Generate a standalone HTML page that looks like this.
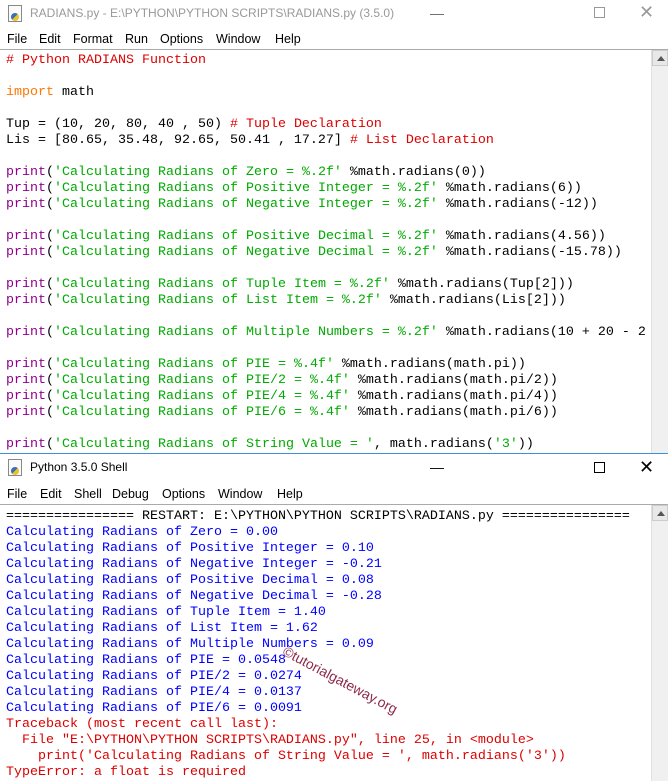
<!DOCTYPE html>
<html><head><meta charset="utf-8"><style>
*{margin:0;padding:0;box-sizing:border-box}
body{width:668px;height:781px;background:#fff;position:relative;overflow:hidden;font-family:"Liberation Sans",sans-serif}
.title{position:absolute;left:0;width:668px;height:27px;background:#fff;font-size:12px;color:#999}
.title span{position:absolute;left:30px;top:6px}
.menu{position:absolute;left:0;width:668px;height:22px;font-size:12.5px;color:#000}
.menu span{position:absolute;top:4px}
.code{position:absolute;left:0;width:651px;background:#fff;font-family:"Liberation Mono",monospace;font-size:13.33px;line-height:16px;white-space:pre;padding-left:6px;overflow:hidden}
.sb{position:absolute;left:651px;width:17px;background:#f0f0f0;border-left:1px solid #e0e0e0}
.sb i{position:absolute;left:0;top:0;width:16px;height:16px;background:#e8e8e8;border:1px solid #ccc}
.sb i:after{content:"";position:absolute;left:4px;top:5px;border-left:4px solid transparent;border-right:4px solid transparent;border-bottom:5px solid #555}
.r{color:#dd0000}.o{color:#ff7700}.p{color:#900090}.g{color:#00aa00}.b{color:#0000ff}
.ctl{position:absolute;font-size:18px;color:#333}
.icon{position:absolute;left:8px;width:14px;height:17px;border:1px solid #888;background:#fafafa}
.icon:after{content:"";position:absolute;left:2px;top:7px;width:8px;height:8px;border-radius:50%;background:linear-gradient(135deg,#3a6fb0 50%,#e8c030 50%)}
</style></head><body>

<div class="title" style="top:0"><div class="icon" style="top:5px"></div><span>RADIANS.py - E:\PYTHON\PYTHON SCRIPTS\RADIANS.py (3.5.0)</span>
<div class="ctl" style="left:430px;top:5px;font-size:14px;color:#666">&#8212;</div>
<div style="position:absolute;left:594px;top:7px;width:11px;height:11px;border:1px solid #999"></div>
<div class="ctl" style="left:639px;top:2px;color:#999">&#10005;</div></div>
<div class="menu" style="top:28px"><span style="left:7px">File</span><span style="left:39px">Edit</span><span style="left:73px">Format</span><span style="left:125px">Run</span><span style="left:160px">Options</span><span style="left:216px">Window</span><span style="left:275px">Help</span></div>
<div style="position:absolute;left:0;top:49px;width:668px;height:1px;background:#aaa"></div>

<div class="code" style="top:53px;height:400px"><span class="r"># Python RADIANS Function</span>

<span class="o">import</span> math

Tup = (10, 20, 80, 40 , 50) <span class="r"># Tuple Declaration</span>
Lis = [80.65, 35.48, 92.65, 50.41 , 17.27] <span class="r"># List Declaration</span>

<span class="p">print</span>(<span class="g">'Calculating Radians of Zero = %.2f'</span> %math.radians(0))
<span class="p">print</span>(<span class="g">'Calculating Radians of Positive Integer = %.2f'</span> %math.radians(6))
<span class="p">print</span>(<span class="g">'Calculating Radians of Negative Integer = %.2f'</span> %math.radians(-12))

<span class="p">print</span>(<span class="g">'Calculating Radians of Positive Decimal = %.2f'</span> %math.radians(4.56))
<span class="p">print</span>(<span class="g">'Calculating Radians of Negative Decimal = %.2f'</span> %math.radians(-15.78))

<span class="p">print</span>(<span class="g">'Calculating Radians of Tuple Item = %.2f'</span> %math.radians(Tup[2]))
<span class="p">print</span>(<span class="g">'Calculating Radians of List Item = %.2f'</span> %math.radians(Lis[2]))

<span class="p">print</span>(<span class="g">'Calculating Radians of Multiple Numbers = %.2f'</span> %math.radians(10 + 20 - 2

<span class="p">print</span>(<span class="g">'Calculating Radians of PIE = %.4f'</span> %math.radians(math.pi))
<span class="p">print</span>(<span class="g">'Calculating Radians of PIE/2 = %.4f'</span> %math.radians(math.pi/2))
<span class="p">print</span>(<span class="g">'Calculating Radians of PIE/4 = %.4f'</span> %math.radians(math.pi/4))
<span class="p">print</span>(<span class="g">'Calculating Radians of PIE/6 = %.4f'</span> %math.radians(math.pi/6))

<span class="p">print</span>(<span class="g">'Calculating Radians of String Value = '</span>, math.radians(<span class="g">'3'</span>))</div>
<div class="sb" style="top:50px;height:403px"><i></i></div>

<div style="position:absolute;left:0;top:453px;width:668px;height:1px;background:#3c8fd8"></div>
<div class="title" style="top:454px"><div class="icon" style="top:5px"></div><span style="color:#000">Python 3.5.0 Shell</span>
<div class="ctl" style="left:430px;top:5px;font-size:14px;color:#000">&#8212;</div>
<div style="position:absolute;left:594px;top:8px;width:11px;height:11px;border:1px solid #000"></div>
<div class="ctl" style="left:639px;top:3px;color:#000">&#10005;</div></div>
<div class="menu" style="top:483px"><span style="left:7px">File</span><span style="left:40px">Edit</span><span style="left:74px">Shell</span><span style="left:112px">Debug</span><span style="left:162px">Options</span><span style="left:218px">Window</span><span style="left:277px">Help</span></div>
<div style="position:absolute;left:0;top:504px;width:668px;height:1px;background:#aaa"></div>

<div class="code" style="top:509px;height:272px">================ RESTART: E:\PYTHON\PYTHON SCRIPTS\RADIANS.py ================
<span class="b">Calculating Radians of Zero = 0.00
Calculating Radians of Positive Integer = 0.10
Calculating Radians of Negative Integer = -0.21
Calculating Radians of Positive Decimal = 0.08
Calculating Radians of Negative Decimal = -0.28
Calculating Radians of Tuple Item = 1.40
Calculating Radians of List Item = 1.62
Calculating Radians of Multiple Numbers = 0.09
Calculating Radians of PIE = 0.0548
Calculating Radians of PIE/2 = 0.0274
Calculating Radians of PIE/4 = 0.0137
Calculating Radians of PIE/6 = 0.0091</span>
<span class="r">Traceback (most recent call last):
  File "E:\PYTHON\PYTHON SCRIPTS\RADIANS.py", line 25, in &lt;module&gt;
    print('Calculating Radians of String Value = ', math.radians('3'))
TypeError: a float is required</span></div>
<div class="sb" style="top:505px;height:276px"><i></i></div>

<div style="position:absolute;left:284px;top:643px;transform:rotate(28deg);transform-origin:left center;font-size:14px;color:#8c2a4a;white-space:nowrap;line-height:14px">©tutorialgateway.org</div>
</body></html>
